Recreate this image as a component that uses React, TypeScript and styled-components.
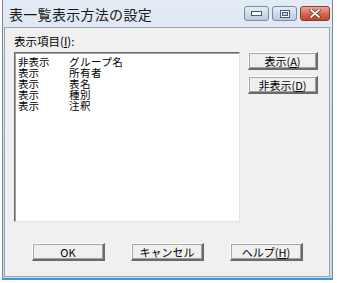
import React from 'react';
import styled, { createGlobalStyle } from 'styled-components';

const GlobalStyle = createGlobalStyle`
  html, body {
    margin: 0;
    padding: 0;
    background: #ffffff;
  }
  body {
    font-family: "Noto Sans CJK JP", "Liberation Sans", sans-serif;
    font-size: 12px;
    color: #000;
  }
`;

const Page = styled.div`
  width: 337px;
  height: 283px;
  padding: 0 4px 3px 2px;
  box-sizing: border-box;
  display: flex;
`;

const Window = styled.div`
  flex: 1;
  display: flex;
  flex-direction: column;
  border: 1px solid #7a8696;
  border-top: none;
  border-bottom: 2px solid #3a9ad8;
  background: linear-gradient(180deg, #e3ebf5 0%, #d5e1ee 40%, #cddaea 100%);
`;

const TitleBar = styled.div`
  height: 27px;
  display: flex;
  align-items: center;
  padding: 0 2px 0 6px;
`;

const Title = styled.div`
  flex: 1;
  font-size: 14px;
  color: #1a1a1a;
  letter-spacing: 0.3px;
`;

const CaptionButtons = styled.div`
  display: flex;
  gap: 3px;
  align-self: flex-start;
  margin-top: 6px;
`;

const CaptionButton = styled.div<{ close?: boolean }>`
  width: ${({ close }) => (close ? '30px' : '25px')};
  height: 15px;
  border: 1px solid ${({ close }) => (close ? '#8a3a30' : '#7b8ba0')};
  border-radius: 3px;
  box-sizing: border-box;
  display: flex;
  align-items: center;
  justify-content: center;
  background: ${({ close }) =>
    close
      ? 'linear-gradient(180deg, #e8a796 0%, #d86a52 50%, #c2432c 100%)'
      : 'linear-gradient(180deg, #e6edf6 0%, #cfdbea 50%, #b9c9dd 100%)'};
`;

const Client = styled.div`
  flex: 1;
  margin: 0 2px 1px 1px;
  border: 1px solid #98a4b2;
  background: #f0f0f0;
  display: flex;
  flex-direction: column;
  padding: 7px 10px 0 9px;
`;

const Label = styled.div`
  font-size: 11.5px;
  line-height: 13px;
  height: 17px;
`;

const Body = styled.div`
  display: flex;
  gap: 8px;
`;

const ListBox = styled.div`
  width: 226px;
  height: 170px;
  box-sizing: border-box;
  background: #fff;
  border-top: 1px solid #6d6d6d;
  border-left: 1px solid #6d6d6d;
  border-right: 1px solid #e3e3e3;
  border-bottom: 1px solid #e3e3e3;
  box-shadow: inset 1px 1px 0 #a0a0a0;
  padding: 3px 0 0 3px;
`;

const ListRow = styled.div`
  display: flex;
  font-size: 10.5px;
  line-height: 11px;
  height: 11px;
`;

const StateCell = styled.span`
  width: 51px;
`;

const NameCell = styled.span`
  letter-spacing: 0.5px;
`;

const SideButtons = styled.div`
  display: flex;
  flex-direction: column;
  gap: 6px;
`;

const Button = styled.div<{ wide?: boolean }>`
  width: ${({ wide }) => (wide ? '73px' : '70px')};
  height: 18px;
  box-sizing: border-box;
  background: #f0f0f0;
  border-top: 1px solid #ffffff;
  border-left: 1px solid #ffffff;
  border-right: 2px solid #6a6a6a;
  border-bottom: 2px solid #6a6a6a;
  box-shadow: 1px 1px 0 #a8a8a8 inset, -1px -1px 0 #a0a0a0 inset;
  display: flex;
  align-items: center;
  justify-content: center;
  font-size: 11px;
`;

const Footer = styled.div`
  display: flex;
  justify-content: flex-start;
  gap: 26px;
  padding: 21px 0 0 18px;
`;

const U = styled.span`
  text-decoration: underline;
`;

const items: [string, string][] = [
  ['非表示', 'グループ名'],
  ['表示', '所有者'],
  ['表示', '表名'],
  ['表示', '種別'],
  ['表示', '注釈'],
];

export default function App() {
  return (
    <>
      <GlobalStyle />
      <Page>
        <Window>
          <TitleBar>
            <Title>表一覧表示方法の設定</Title>
            <CaptionButtons>
              <CaptionButton>
                <svg width="11" height="5" viewBox="0 0 11 5">
                  <rect x="0.5" y="0.5" width="10" height="4" fill="#fff" stroke="#4a5a70" />
                </svg>
              </CaptionButton>
              <CaptionButton>
                <svg width="10" height="8" viewBox="0 0 10 8">
                  <rect x="0.5" y="0.5" width="9" height="7" fill="#fff" stroke="#4a5a70" />
                  <rect x="2.5" y="2.5" width="5" height="3" fill="#c5d2e2" stroke="#4a5a70" />
                </svg>
              </CaptionButton>
              <CaptionButton close>
                <svg width="12" height="9" viewBox="0 0 12 9">
                  <path d="M2 1 L10 8 M10 1 L2 8" stroke="#5a2a22" strokeWidth="3.2" strokeLinecap="round" />
                  <path d="M2 1 L10 8 M10 1 L2 8" stroke="#ffffff" strokeWidth="1.8" strokeLinecap="round" />
                </svg>
              </CaptionButton>
            </CaptionButtons>
          </TitleBar>
          <Client>
            <Label>
              表示項目(<U>I</U>):
            </Label>
            <Body>
              <ListBox>
                {items.map(([state, name]) => (
                  <ListRow key={name}>
                    <StateCell>{state}</StateCell>
                    <NameCell>{name}</NameCell>
                  </ListRow>
                ))}
              </ListBox>
              <SideButtons>
                <Button>
                  表示(<U>A</U>)
                </Button>
                <Button>
                  非表示(<U>D</U>)
                </Button>
              </SideButtons>
            </Body>
            <Footer>
              <Button wide>OK</Button>
              <Button wide>キャンセル</Button>
              <Button wide>
                ヘルプ(<U>H</U>)
              </Button>
            </Footer>
          </Client>
        </Window>
      </Page>
    </>
  );
}
